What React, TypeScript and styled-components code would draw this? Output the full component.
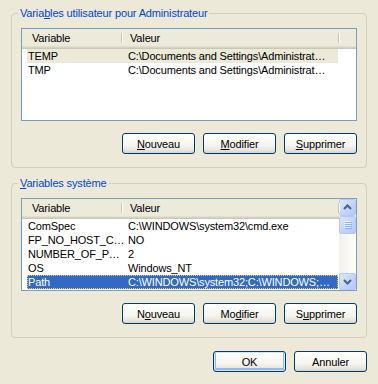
import React from 'react';
import styled, { createGlobalStyle } from 'styled-components';

const GlobalStyle = createGlobalStyle`
  html, body {
    margin: 0;
    padding: 0;
    background: #ece9d8;
  }
  body {
    font-family: 'Liberation Sans', Arial, sans-serif;
    font-size: 11px;
    letter-spacing: -0.15px;
    color: #000;
  }
`;

type Row = { name: string; value: string; state?: 'focus' | 'inactive' };

const userVars: Row[] = [
  { name: 'TEMP', value: 'C:\\Documents and Settings\\Administrat…', state: 'inactive' },
  { name: 'TMP', value: 'C:\\Documents and Settings\\Administrat…' },
];

const systemVars: Row[] = [
  { name: 'ComSpec', value: 'C:\\WINDOWS\\system32\\cmd.exe' },
  { name: 'FP_NO_HOST_C…', value: 'NO' },
  { name: 'NUMBER_OF_P…', value: '2' },
  { name: 'OS', value: 'Windows_NT' },
  { name: 'Path', value: 'C:\\WINDOWS\\system32;C:\\WINDOWS;…', state: 'focus' },
];

function ListView({ rows, scroll }: { rows: Row[]; scroll?: boolean }) {
  return (
    <ListFrame>
      <ListBody>
        <Header>
          <HeaderCell $width={100} $pad={10}>Variable</HeaderCell>
          <HeaderCell $width={217} $pad={8}>Valeur</HeaderCell>
        </Header>
        {rows.map((r) => (
          <ListRow key={r.name} $state={r.state}>
            <Cell $width={100}>{r.name}</Cell>
            <Cell $width={211}>{r.value}</Cell>
          </ListRow>
        ))}
      </ListBody>
      {scroll && (
        <ScrollBar>
          <ScrollButton>
            <svg width="15" height="15" viewBox="0 0 15 15">
              <path d="M4 9 L7.5 5.5 L11 9" fill="none" stroke="#4d6185" strokeWidth="2" />
            </svg>
          </ScrollButton>
          <Thumb>
            <svg width="8" height="8" viewBox="0 0 8 8">
              {[0, 2, 4, 6].map((y) => (
                <g key={y}>
                  <rect x="0" y={y} width="7" height="1" fill="#eef4fe" />
                  <rect x="1" y={y + 1} width="7" height="1" fill="#8cb0f8" />
                </g>
              ))}
            </svg>
          </Thumb>
          <Track />
          <ScrollButton>
            <svg width="15" height="15" viewBox="0 0 15 15">
              <path d="M4 6 L7.5 9.5 L11 6" fill="none" stroke="#4d6185" strokeWidth="2" />
            </svg>
          </ScrollButton>
        </ScrollBar>
      )}
    </ListFrame>
  );
}

export default function App() {
  return (
    <Dialog>
      <GlobalStyle />
      <GroupBox $top={7}>
        <Legend>
          Varia<u>b</u>les utilisateur pour Administrateur
        </Legend>
        <ListView rows={userVars} />
        <ButtonRow>
          <Button><u>N</u>ouveau</Button>
          <Button><u>M</u>odifier</Button>
          <Button><u>S</u>upprimer</Button>
        </ButtonRow>
      </GroupBox>
      <GroupBox $top={9}>
        <Legend>
          <u>V</u>ariables système
        </Legend>
        <ListView rows={systemVars} scroll />
        <ButtonRow>
          <Button>N<u>o</u>uveau</Button>
          <Button>Mo<u>d</u>ifier</Button>
          <Button>S<u>u</u>pprimer</Button>
        </ButtonRow>
      </GroupBox>
      <DialogButtons>
        <Button $default>OK</Button>
        <Button>Annuler</Button>
      </DialogButtons>
    </Dialog>
  );
}

const Dialog = styled.div`
  width: 378px;
  height: 384px;
  box-sizing: border-box;
  display: flex;
  flex-direction: column;
  overflow: hidden;
`;

const GroupBox = styled.fieldset<{ $top: number }>`
  margin: ${({ $top }) => $top}px 11px 0;
  padding: 8px 9px 13px;
  min-width: 0;
  border: 1px solid #d0d0bf;
  border-radius: 4px;
`;

const Legend = styled.legend`
  margin-left: -3px;
  padding: 0 2px;
  line-height: 13px;
  color: #0046d5;
`;

const ListFrame = styled.div`
  height: 93px;
  box-sizing: border-box;
  border: 1px solid #7f9db9;
  background: #fff;
  display: flex;
`;

const ListBody = styled.div`
  flex: 1;
  min-width: 0;
  display: flex;
  flex-direction: column;
`;

const Header = styled.div`
  height: 20px;
  box-sizing: border-box;
  display: flex;
  background: #ebeadb;
  border-bottom: 1px solid #cbc7b8;
  box-shadow: inset 0 -1px 0 #d6d2c2, inset 0 -2px 0 #e2decd;
`;

const HeaderCell = styled.div<{ $width: number; $pad: number }>`
  width: ${({ $width }) => $width}px;
  padding-left: ${({ $pad }) => $pad}px;
  box-sizing: border-box;
  line-height: 18px;
  position: relative;
  &::after {
    content: '';
    position: absolute;
    right: 0;
    top: 4px;
    bottom: 5px;
    width: 1px;
    background: #c7c5b2;
    box-shadow: 1px 0 0 #fff;
  }
`;

const ListRow = styled.div<{ $state?: 'focus' | 'inactive' }>`
  display: flex;
  width: 311px;
  height: 14px;
  margin-left: 5px;
  line-height: 14px;
  box-sizing: border-box;
  background: ${({ $state }) =>
    $state === 'focus' ? '#316ac5' : $state === 'inactive' ? '#ece9d8' : 'transparent'};
  color: ${({ $state }) => ($state === 'focus' ? '#fff' : '#000')};
  outline: ${({ $state }) => ($state === 'focus' ? '1px dotted #f5c36a' : 'none')};
  outline-offset: -1px;
`;

const Cell = styled.div<{ $width: number }>`
  width: ${({ $width }) => $width}px;
  padding-left: 1px;
  box-sizing: border-box;
  white-space: nowrap;
  overflow: hidden;
`;

const ScrollBar = styled.div`
  width: 17px;
  display: flex;
  flex-direction: column;
  background: linear-gradient(90deg, #f3f1ec, #fefefb);
`;

const ScrollButton = styled.div`
  height: 17px;
  box-sizing: border-box;
  border: 1px solid #b6c9f3;
  border-radius: 2px;
  background: linear-gradient(135deg, #dce7fe, #c1d3fb 60%, #b4c8f6);
  display: flex;
  align-items: center;
  justify-content: center;
`;

const Thumb = styled(ScrollButton)`
  height: 18px;
`;

const Track = styled.div`
  flex: 1;
`;

const ButtonRow = styled.div`
  display: flex;
  justify-content: flex-end;
  gap: 8px;
  margin-top: 12px;
`;

const DialogButtons = styled(ButtonRow)`
  margin: 13px 11px 0 0;
`;

const Button = styled.button<{ $default?: boolean }>`
  width: 73px;
  height: 21px;
  padding: 0;
  box-sizing: border-box;
  font-family: inherit;
  font-size: 11px;
  letter-spacing: -0.15px;
  color: #000;
  border: 1px solid #003c74;
  border-radius: 3px;
  background: linear-gradient(180deg, #ffffff 0%, #f5f4ef 60%, #e6e3da 88%, #d6d0c5 100%);
  box-shadow: ${({ $default }) =>
    $default ? 'inset 0 0 0 1px #cee7ff, inset 0 -1px 0 2px #98b8ea' : 'none'};
  u {
    text-decoration-thickness: 1px;
    text-underline-offset: 1px;
  }
`;
